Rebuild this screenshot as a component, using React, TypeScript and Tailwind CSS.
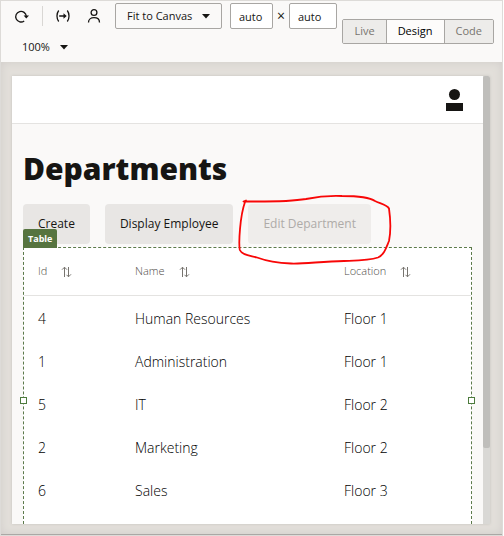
import { useState } from "react";

const departments = [
  { id: 4, name: "Human Resources", location: "Floor 1" },
  { id: 1, name: "Administration", location: "Floor 1" },
  { id: 5, name: "IT", location: "Floor 2" },
  { id: 2, name: "Marketing", location: "Floor 2" },
  { id: 6, name: "Sales", location: "Floor 3" },
];

function RefreshIcon() {
  return (
    <svg width="16" height="16" viewBox="0 0 16 16" fill="none" stroke="#161513" strokeWidth="1.3" aria-hidden="true">
      <path d="M10.200 12.900A5.300 5.300 0 1 1 12.300 8.300" />
      <path d="M9.600 7.600h5.400l-2.700 3z" fill="#161513" stroke="none" />
    </svg>
  );
}

function FitWidthIcon() {
  return (
    <svg width="16" height="16" viewBox="0 0 16 16" fill="none" stroke="#161513" strokeWidth="1.3" aria-hidden="true">
      <path d="M3.700 2.500C1.400 5.600 1.400 10.400 3.700 13.500M12.300 2.500c2.300 3.100 2.300 7.900 0 11M4.200 8h6" />
      <path d="M8.500 5.300 11.700 8 8.500 10.700z" fill="#161513" stroke="none" />
    </svg>
  );
}

function PersonIcon() {
  return (
    <svg width="14" height="16" viewBox="0 0 14 16" fill="none" stroke="#161513" strokeWidth="1.3" aria-hidden="true">
      <circle cx="7" cy="4.500" r="2.900" />
      <path d="M1.500 14.500C1.500 11.300 3.800 9.700 7 9.700s5.500 1.600 5.500 4.800" />
    </svg>
  );
}

function Caret({ className }: { className: string }) {
  return (
    <svg width="8" height="5" viewBox="0 0 8 5" className={`pointer-events-none absolute ${className}`} aria-hidden="true">
      <path d="M0 0h8L4 4.500z" fill="#161513" />
    </svg>
  );
}

function SortIcon() {
  return (
    <svg width="11" height="12" viewBox="0 0 11 12" fill="none" stroke="#77746f" aria-hidden="true">
      <path d="M3.500 11V1.200M1 3.700l2.500-2.500L6 3.700M7.500 1v9.800M5.500 8.800l2 2 2.500-2.500" />
    </svg>
  );
}

function ColumnHeader({ label, className }: { label: string; className: string }) {
  return (
    <th scope="col" className={`h-12 border-b border-[#e4e3e1] p-0 text-left font-light ${className}`}>
      <button className="flex items-center gap-3.5">
        {label}
        <SortIcon />
      </button>
    </th>
  );
}

function Toolbar() {
  const modes = ["Live", "Design", "Code"];
  const [mode, setMode] = useState("Design");
  return (
    <header className="flex shrink-0 items-center justify-between bg-[#faf9f8] pr-2 text-[11px]">
      <div className="flex w-[338px] flex-wrap items-center pt-0.5 pl-[13px]">
        <button aria-label="Refresh" className="mr-3"><RefreshIcon /></button>
        <span className="mr-3 h-5 w-px bg-[#d9d7d4]" />
        <button aria-label="Fit width" className="mr-4"><FitWidthIcon /></button>
        <button aria-label="User" className="mr-3.5"><PersonIcon /></button>
        <div className="relative mr-2">
          <select aria-label="Canvas size" className="h-[26px] w-[107px] appearance-none rounded-xs border border-[#a8a6a3] bg-[#faf9f8] pl-[11px] font-medium">
            <option>Fit to Canvas</option>
          </select>
          <Caret className="top-[11px] right-3" />
        </div>
        <input aria-label="Width" defaultValue="auto" className="h-[26px] w-[43px] rounded-xs border border-[#a8a6a3] bg-white pl-2" />
        <span className="w-4 text-center text-sm leading-5">×</span>
        <input aria-label="Height" defaultValue="auto" className="h-[26px] w-12 rounded-xs border border-[#a8a6a3] bg-white pl-2" />
        <div className="relative ml-2">
          <select aria-label="Zoom" className="h-[33px] w-14 appearance-none bg-[#faf9f8] pt-1 font-medium">
            <option>100%</option>
          </select>
          <Caret className="top-4 right-2.5" />
        </div>
      </div>
      <div className="flex overflow-hidden rounded-xs border border-[#a8a6a3]">
        {modes.map((m) => (
          <button
            key={m}
            aria-pressed={m === mode}
            onClick={() => setMode(m)}
            className="h-[23px] border-l border-[#a8a6a3] bg-[#edecea] px-[11px] text-[#77746f] first:border-l-0 aria-pressed:bg-[#fdfcfb] aria-pressed:font-medium aria-pressed:text-black"
          >
            {m}
          </button>
        ))}
      </div>
    </header>
  );
}

function DepartmentTable() {
  return (
    <section className="relative mt-[3px] flex-1 border border-b-0 border-dashed border-[#5c7a4b] bg-white">
      <span className="absolute -top-[19px] -left-px h-[19px] rounded-t-xs bg-[#56743f] px-[5px] text-[9px] leading-5 font-bold text-white">
        Table
      </span>
      <span className="absolute top-[149px] -left-1 size-[7px] border border-[#4c7a3c] bg-white" />
      <span className="absolute top-[149px] -right-1 size-[7px] border border-[#4c7a3c] bg-white" />
      <table className="w-full table-fixed border-separate border-spacing-0">
        <thead className="text-[11px] text-[#4f4c48]">
          <tr>
            <ColumnHeader label="Id" className="w-[111px] pl-3.5" />
            <ColumnHeader label="Name" className="w-[209px]" />
            <ColumnHeader label="Location" className="" />
          </tr>
        </thead>
        <tbody className="text-sm font-light text-black">
          {departments.map((d) => (
            <tr key={d.id} className="h-[43px]">
              <td className="p-0 pt-0.5 pl-3.5">{d.id}</td>
              <td className="p-0 pt-0.5">{d.name}</td>
              <td className="p-0 pt-0.5">{d.location}</td>
            </tr>
          ))}
        </tbody>
      </table>
    </section>
  );
}

export default function App() {
  return (
    <div className="h-screen bg-white pr-px font-['Open_Sans','Noto_Sans',sans-serif] text-[#161513]">
      <div className="flex h-full flex-col border border-[#dddbd8]">
        <Toolbar />
        <main className="flex min-h-0 flex-1 border-b border-[#aaa8a5] bg-[#e2dfda] pt-3.5 pr-3 pb-2.5 pl-[11px] inset-shadow-[0_0_8px_#d0ccc9]">
          <div className="flex min-w-0 flex-1 overflow-hidden rounded-tr-xs shadow-[0_0_3px_#c4c1bc]">
            <div className="flex min-w-0 flex-1 flex-col overflow-hidden bg-[#faf9f8]">
              <div className="flex h-12 shrink-0 items-center justify-end border-b border-[#e4e3e1] bg-white pr-5">
                <button aria-label="Account">
                  <svg width="17" height="22" viewBox="0 0 17 22" fill="#161513" aria-hidden="true">
                    <circle cx="8.500" cy="5.500" r="5.500" />
                    <path d="M0 14h17v8H0z" />
                  </svg>
                </button>
              </div>
              <div className="flex min-h-0 flex-1 flex-col px-[11px] pt-6">
                <h1 className="text-[30px] leading-[42px] font-extrabold">Departments</h1>
                <div className="mt-3.5 flex gap-[15px] text-xs font-medium">
                  <button className="h-10 rounded-sm bg-[#e8e6e4] px-[15px]">Create</button>
                  <button className="h-10 rounded-sm bg-[#e8e6e4] px-[15px]">Display Employee</button>
                  <div className="relative">
                    <button disabled className="h-10 rounded-sm bg-[#efedeb] px-[15px] text-[#aeaba8]">Edit Department</button>
                    <svg className="pointer-events-none absolute -top-2.5 -left-2.5 z-10" width="154" height="74" viewBox="238 194 154 74" fill="none" stroke="#f80707" strokeWidth="1.800" strokeLinecap="round" strokeLinejoin="round" aria-hidden="true">
                      <path d="M243.500 201.500 246 200.500 246 201.500C266 201.500 288 202 306 199C318 196.500 330 195.500 342 196C357 196 370 197.500 375 201C380 203.500 387 204.500 389 208.500C390.500 219 391 231 389 241C386 248 384 255 378 257.500C369 260.500 357 260.500 344 261C321 261.500 304 264 291 263.500C278 263 265 260.500 257 257.500C250 255.500 242 255 239.800 250C238.500 243 240 216 245 202" />
                    </svg>
                  </div>
                </div>
                <DepartmentTable />
              </div>
            </div>
            <div className="w-[7px] shrink-0 bg-[#d9d8d5]">
              <div className="h-[83%] rounded-xs bg-[#bfbebb]" />
            </div>
          </div>
        </main>
      </div>
    </div>
  );
}
